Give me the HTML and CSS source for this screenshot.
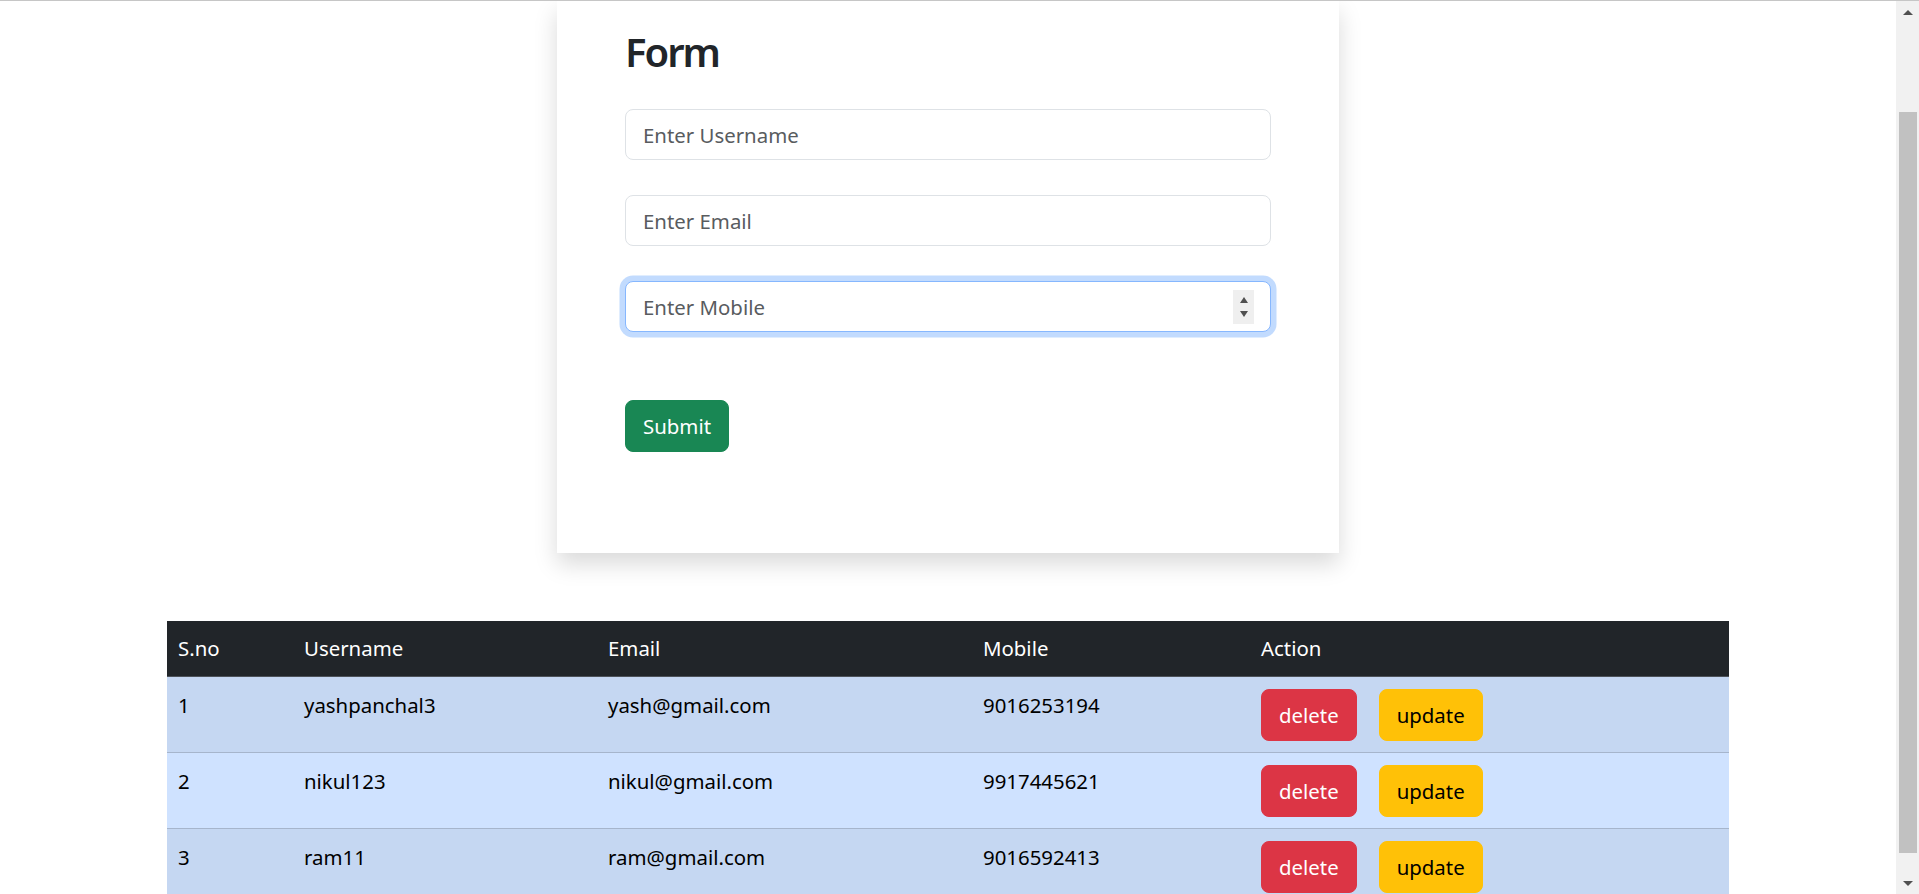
FILE: index.html
```html
<!DOCTYPE html>
<html lang="en">
<head>
<meta charset="utf-8">
<title>Form</title>
<link rel="stylesheet" href="styles.css">
</head>
<body>
<div class="window">
  <main class="page">
    <section class="card">
      <h2 class="card-title">Form</h2>
      <form class="form">
        <div class="field-group">
          <input class="field" type="text" placeholder="Enter Username">
        </div>
        <div class="field-group">
          <input class="field" type="text" placeholder="Enter Email">
        </div>
        <div class="field-group field-group-last">
          <input class="field field-focus" type="text" placeholder="Enter Mobile">
          <span class="spin"><span class="spin-up"></span><span class="spin-down"></span></span>
        </div>
        <button class="btn btn-success" type="button">Submit</button>
      </form>
    </section>

    <table class="table">
      <colgroup>
        <col class="col-sno">
        <col class="col-user">
        <col class="col-email">
        <col class="col-mobile">
        <col class="col-action">
      </colgroup>
      <thead>
        <tr>
          <th>S.no</th>
          <th>Username</th>
          <th>Email</th>
          <th>Mobile</th>
          <th>Action</th>
        </tr>
      </thead>
      <tbody>
        <tr>
          <td>1</td>
          <td>yashpanchal3</td>
          <td>yash@gmail.com</td>
          <td>9016253194</td>
          <td><button class="btn btn-danger" type="button">delete</button><button class="btn btn-warning" type="button">update</button></td>
        </tr>
        <tr>
          <td>2</td>
          <td>nikul123</td>
          <td>nikul@gmail.com</td>
          <td>9917445621</td>
          <td><button class="btn btn-danger" type="button">delete</button><button class="btn btn-warning" type="button">update</button></td>
        </tr>
        <tr>
          <td>3</td>
          <td>ram11</td>
          <td>ram@gmail.com</td>
          <td>9016592413</td>
          <td><button class="btn btn-danger" type="button">delete</button><button class="btn btn-warning" type="button">update</button></td>
        </tr>
      </tbody>
    </table>
  </main>

  <div class="scrollbar" aria-hidden="true">
    <div class="sb-btn"><span class="sb-up"></span></div>
    <div class="sb-track"><div class="sb-thumb"></div></div>
    <div class="sb-btn"><span class="sb-down"></span></div>
  </div>
</div>
</body>
</html>
```

FILE: styles.css
```css
* {
  box-sizing: border-box;
}

html,
body {
  margin: 0;
  height: 100%;
}

body {
  font-family: "Noto Sans", "Open Sans", sans-serif;
  font-size: 20.4px;
  line-height: 33px;
  color: #212529;
  background: #fff;
  border-top: 1px solid #c6c6c6;
  overflow: hidden;
}

.window {
  display: flex;
  height: 893px;
}

.page {
  flex: 1;
  min-width: 0;
  overflow: hidden;
  display: flex;
  flex-direction: column;
  align-items: center;
}

/* ---------- card ---------- */
.card {
  flex-shrink: 0;
  width: 782px;
  padding: 27px 68px 101px;
  background: #fff;
  box-shadow: 0 11px 22px rgba(0, 0, 0, 0.15);
}

.card-title {
  margin: 0 0 33px;
  font-size: 40px;
  line-height: 48px;
  font-weight: 600;
  letter-spacing: -2px;
  color: #212529;
}

.form {
  display: flex;
  flex-direction: column;
  align-items: flex-start;
}

.field-group {
  position: relative;
  width: 100%;
  margin-bottom: 35px;
}

.field-group-last {
  margin-bottom: 68px;
}

.field {
  display: block;
  width: 100%;
  height: 51px;
  padding: 0 17px;
  border: 1px solid #dee2e6;
  border-radius: 8px;
  font: inherit;
  color: #212529;
  background: #fff;
  outline: none;
}

.field::placeholder {
  color: #595c5f;
  opacity: 1;
}

.field-focus {
  border-color: #86b7fe;
  box-shadow: 0 0 0 5.5px rgba(13, 110, 253, 0.25);
}

.spin {
  position: absolute;
  top: 9px;
  right: 17px;
  width: 21px;
  height: 34px;
  background: #efefef;
  display: flex;
  flex-direction: column;
  align-items: center;
  justify-content: center;
  gap: 8px;
}

.spin-up,
.spin-down {
  width: 0;
  height: 0;
  border-left: 4px solid transparent;
  border-right: 4px solid transparent;
}

.spin-up {
  border-bottom: 6px solid #505050;
}

.spin-down {
  border-top: 6px solid #505050;
}

/* ---------- buttons ---------- */
.btn {
  height: 52px;
  padding: 0 17px;
  border: 1px solid transparent;
  border-radius: 8px;
  font: inherit;
  line-height: 33px;
  cursor: pointer;
}

.btn-success {
  background: #198754;
  border-color: #198754;
  color: #fff;
}

.btn-danger {
  background: #dc3545;
  border-color: #dc3545;
  color: #fff;
  margin-right: 22px;
}

.btn-warning {
  background: #ffc107;
  border-color: #ffc107;
  color: #000;
}

/* ---------- table ---------- */
.table {
  flex-shrink: 0;
  width: 1562px;
  margin-top: 68px;
  border-collapse: collapse;
  table-layout: fixed;
}

.col-sno { width: 126px; }
.col-user { width: 304px; }
.col-email { width: 375px; }
.col-mobile { width: 278px; }
.col-action { width: 479px; }

.table th {
  padding: 11px;
  background: #212529;
  color: #fff;
  font-weight: 400;
  text-align: left;
  vertical-align: top;
  border-bottom: 1px solid #4d5259;
}

.table td {
  padding: 12px 11px 11px;
  color: #000;
  vertical-align: top;
  white-space: nowrap;
  border-bottom: 1px solid #a6b5cc;
}

.table tbody tr:nth-child(odd) td {
  background: #c5d7f2;
}

.table tbody tr:nth-child(even) td {
  background: #cfe2ff;
}

/* ---------- scrollbar ---------- */
.scrollbar {
  flex-shrink: 0;
  width: 23px;
  background: #f1f1f1;
  display: flex;
  flex-direction: column;
}

.sb-btn {
  height: 22px;
  display: flex;
  align-items: center;
  justify-content: center;
}

.sb-up,
.sb-down {
  width: 0;
  height: 0;
  border-left: 5px solid transparent;
  border-right: 5px solid transparent;
}

.sb-up {
  border-bottom: 5px solid #505050;
}

.sb-down {
  border-top: 5px solid #505050;
}

.sb-track {
  flex: 1;
  padding: 89px 1px 0 3px;
}

.sb-thumb {
  width: 18px;
  height: 741px;
  background: #c1c1c1;
}
```
